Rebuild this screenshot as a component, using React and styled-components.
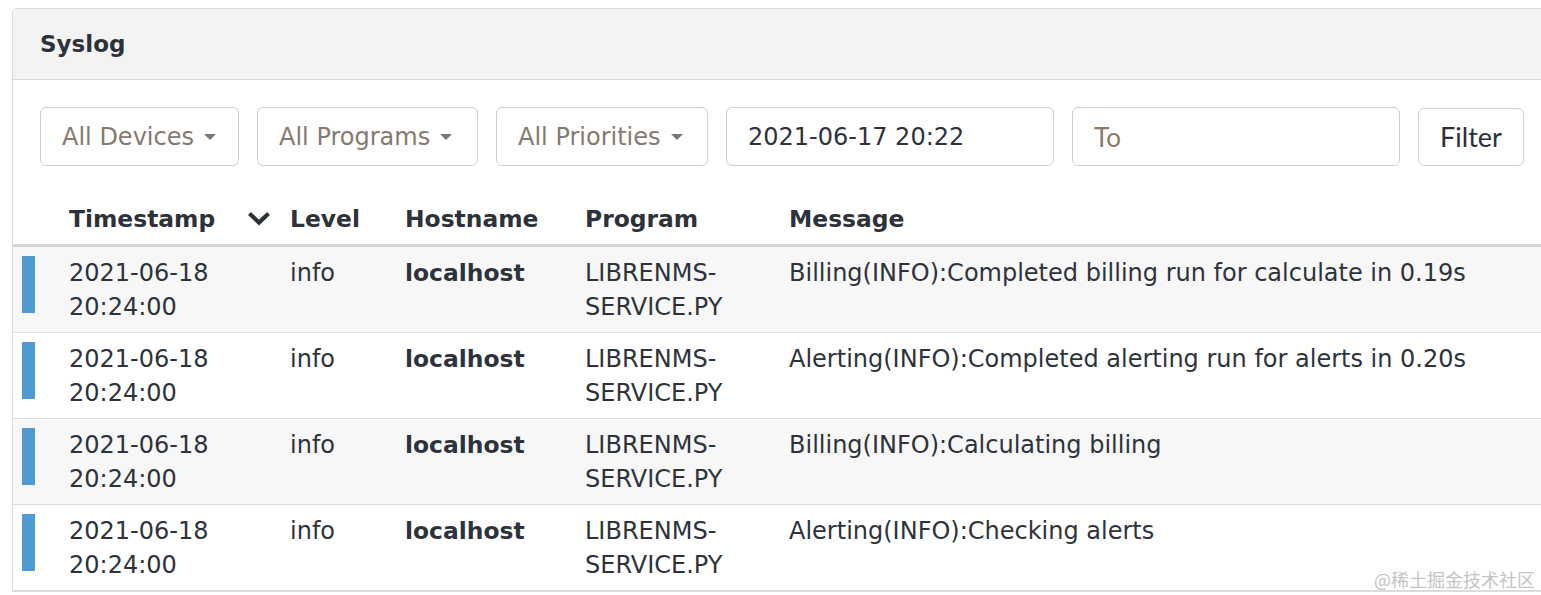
import React from "react";
import styled, { createGlobalStyle } from "styled-components";

const GlobalStyle = createGlobalStyle`
  html, body { margin: 0; padding: 0; background: #ffffff; }
  body {
    font-family: "DejaVu Sans", Verdana, sans-serif;
    color: #333;
    overflow: hidden;
  }
`;

const Page = styled.div`
  position: relative;
  width: 1541px;
  height: 595px;
  overflow: hidden;
  padding: 8px 0 0 12px;
  box-sizing: border-box;
`;

const Panel = styled.section`
  margin-right: -24px;
  border: 1px solid #dcdcdc;
  border-radius: 5px 5px 0 0;
  background: #fff;
`;

const PanelHeading = styled.header`
  height: 70px;
  display: flex;
  align-items: center;
  padding-left: 27px;
  background: #f3f3f3;
  border-bottom: 1px solid #d8d8d8;
  border-radius: 5px 5px 0 0;
  font-weight: bold;
  font-size: 23px;
  color: #2d323a;
`;

const FilterBar = styled.form`
  display: flex;
  align-items: center;
  gap: 18px;
  padding: 27px 0 0 27px;
  height: 59px;
`;

const Control = styled.div`
  box-sizing: border-box;
  flex: none;
  width: ${(p) => p.$w}px;
  height: 59px;
  border: 1px solid #cfcfcf;
  border-radius: 6px;
  display: flex;
  align-items: center;
  padding: 0 21px;
  font-size: 24px;
  white-space: nowrap;
  background: #fff;
`;

const SelectText = styled.span`
  color: #857a72;
`;

const Caret = styled.span`
  flex: none;
  margin-left: 10px;
  width: 0;
  height: 0;
  border-left: 6px solid transparent;
  border-right: 6px solid transparent;
  border-top: 6px solid #777;
`;

const InputValue = styled.span`
  color: #2e333b;
  font-size: 24px;
`;

const Placeholder = styled.span`
  color: #8b7868;
  font-family: Lato, "Open Sans", sans-serif;
  font-size: 26px;
`;

const FilterButton = styled.button`
  box-sizing: border-box;
  flex: none;
  width: 106px;
  height: 58px;
  border: 1px solid #cfcfcf;
  border-radius: 6px;
  background: #fff;
  font-family: Lato, "Open Sans", sans-serif;
  font-size: 27px;
  color: #2b3038;
  padding: 0;
`;

const Table = styled.div`
  margin-top: 28px;
`;

const cols = "56px 221px 115px 180px 204px 1fr";

const HeadRow = styled.div`
  display: grid;
  grid-template-columns: ${cols};
  padding: 8px 0;
  border-bottom: 3px solid #d4d4d4;
  font-weight: bold;
  font-size: 23.4px;
  line-height: 34px;
  color: #2d323a;
`;

const HeadCell = styled.div`
  display: flex;
  align-items: center;
  justify-content: space-between;
  padding-right: ${(p) => (p.$sort ? "20px" : "0")};
`;

const Row = styled.div`
  display: grid;
  grid-template-columns: ${cols};
  padding: 9px 0 8px;
  border-bottom: 1px solid #dcdcdc;
  background: ${(p) => (p.$striped ? "#f7f7f7" : "#fff")};
  font-size: 24px;
  line-height: 34px;
  color: #2e333b;
`;

const BarCell = styled.div`
  padding-left: 9px;
`;

const LevelBar = styled.div`
  width: 13px;
  height: 57px;
  background: #4f9bd1;
`;

const Cell = styled.div`
  font-weight: ${(p) => (p.$bold ? "bold" : "normal")};
  font-size: ${(p) => (p.$bold ? "23.4px" : "24px")};
`;

const Watermark = styled.div`
  position: absolute;
  right: 6px;
  bottom: 3px;
  font-family: "Noto Sans CJK SC", sans-serif;
  font-size: 18px;
  color: #c4c4c4;
`;

const rows = [
  "Billing(INFO):Completed billing run for calculate in 0.19s",
  "Alerting(INFO):Completed alerting run for alerts in 0.20s",
  "Billing(INFO):Calculating billing",
  "Alerting(INFO):Checking alerts",
];

export default function App() {
  return (
    <>
      <GlobalStyle />
      <Page>
        <Panel>
          <PanelHeading>Syslog</PanelHeading>
          <FilterBar onSubmit={(e) => e.preventDefault()}>
            <Control $w={199}>
              <SelectText>All Devices</SelectText>
              <Caret />
            </Control>
            <Control $w={221}>
              <SelectText>All Programs</SelectText>
              <Caret />
            </Control>
            <Control $w={212}>
              <SelectText>All Priorities</SelectText>
              <Caret />
            </Control>
            <Control $w={328}>
              <InputValue>2021-06-17 20:22</InputValue>
            </Control>
            <Control $w={328}>
              <Placeholder>To</Placeholder>
            </Control>
            <FilterButton type="submit">Filter</FilterButton>
          </FilterBar>
          <Table>
            <HeadRow>
              <div />
              <HeadCell $sort>
                <span>Timestamp</span>
                <svg width="22" height="14" viewBox="0 0 22 14">
                  <polyline
                    points="3,3 11,10.5 19,3"
                    fill="none"
                    stroke="#2d323a"
                    strokeWidth="4.2"
                    strokeLinecap="square"
                  />
                </svg>
              </HeadCell>
              <HeadCell>Level</HeadCell>
              <HeadCell>Hostname</HeadCell>
              <HeadCell>Program</HeadCell>
              <HeadCell>Message</HeadCell>
            </HeadRow>
            {rows.map((msg, i) => (
              <Row key={i} $striped={i % 2 === 0}>
                <BarCell>
                  <LevelBar />
                </BarCell>
                <Cell>
                  2021-06-18
                  <br />
                  20:24:00
                </Cell>
                <Cell>info</Cell>
                <Cell $bold>localhost</Cell>
                <Cell>
                  LIBRENMS-
                  <br />
                  SERVICE.PY
                </Cell>
                <Cell>{msg}</Cell>
              </Row>
            ))}
          </Table>
        </Panel>
        <Watermark>@稀土掘金技术社区</Watermark>
      </Page>
    </>
  );
}
